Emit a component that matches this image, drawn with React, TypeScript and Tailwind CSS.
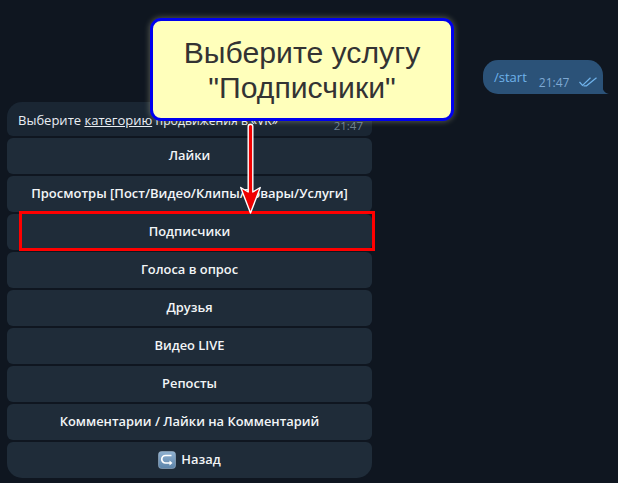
import React from "react";

const buttons = [
  { label: "Лайки", size: "text-[12.9px]" },
  { label: "Просмотры [Пост/Видео/Клипы/Товары/Услуги]", size: "text-[13px]" },
  { label: "Подписчики", size: "text-[12.9px]" },
  { label: "Голоса в опрос", size: "text-[12.9px]" },
  { label: "Друзья", size: "text-[12.9px]" },
  { label: "Видео LIVE", size: "text-[12.9px]" },
  { label: "Репосты", size: "text-[12.9px]" },
  { label: "Комментарии / Лайки на Комментарий", size: "text-[12.9px]" },
];

const BackIcon = () => (
  <svg width="18" height="18" viewBox="0 0 18 18" className="shrink-0">
    <defs>
      <linearGradient id="backFill" x1="0" y1="0" x2="0" y2="1">
        <stop offset="0" stopColor="#8fb0cf" />
        <stop offset="1" stopColor="#5c84aa" />
      </linearGradient>
    </defs>
    <rect x="0.5" y="0.5" width="17" height="17" rx="3" fill="url(#backFill)" stroke="#9db4c8" strokeWidth="0.6" />
    <path d="M13.5 4.5H7.5a3.5 3.5 0 0 0 0 7.5h4.5" fill="none" stroke="#fff" strokeWidth="1.7" />
    <path d="M11.5 9.5l3 2.5-3 2.5z" fill="#fff" />
  </svg>
);

const ReadChecks = () => (
  <svg width="18" height="10" viewBox="0 0 18 10" fill="none" stroke="#6fb2ea" strokeWidth="1.2">
    <path d="M0.5 5L3.5 8.5L11.5 0.8" />
    <path d="M4.5 8.8H7.5L17.5 0.8" />
  </svg>
);

const App = () => {
  return (
    <div className="relative w-[618px] h-[483px] overflow-hidden bg-[#0f1620] font-['Open_Sans',sans-serif]">
      <div className="flex justify-end pt-[60px] pr-[15px]">
        <div className="relative flex items-start w-[120px] h-[34px] pl-[11px] rounded-[15px] rounded-br-none bg-[#2b5278]">
          <span className="mt-[8px] text-[13px] leading-[18px] text-[#6fb2ea]">/start</span>
          <span className="ml-[12px] mt-[15px] text-[12px] leading-[15px] text-[#7da8d3]">21:47</span>
          <span className="ml-[10px] mt-[17px]">
            <ReadChecks />
          </span>
          <svg width="7" height="10" viewBox="0 0 7 10" className="absolute right-[-6px] bottom-0">
            <path d="M0 0C0 5 2 9 7 10H0z" fill="#2b5278" />
          </svg>
        </div>
      </div>

      <div className="flex flex-col gap-[2px] w-[365px] ml-[7px] mt-[8px]">
        <div className="relative h-[34px] pl-[11px] pt-[9px] rounded-t-[15px] rounded-b-[6px] bg-[#1a2633] text-[13px] leading-[18px] text-[#e9eef3]">
          Выберите <span className="underline">категорию</span>{" "}
          <span className="text-[12.2px]">продвижения в «VK»</span>
          <span className="absolute right-[9px] bottom-[3px] text-[11.5px] leading-[15px] text-[#6d7f8f]">21:47</span>
        </div>
        {buttons.map((b) => (
          <div
            key={b.label}
            className={`flex items-center justify-center h-[36px] rounded-[6px] bg-[#1f2c39] ${b.size} font-semibold text-[#f2f5f7]`}
          >
            {b.label}
          </div>
        ))}
        <div className="flex items-center justify-center gap-[5px] h-[36px] rounded-t-[6px] rounded-b-[15px] bg-[#1f2c39] text-[12.9px] font-semibold text-[#f2f5f7]">
          <BackIcon />
          Назад
        </div>
      </div>

      {/* annotations over the screenshot */}
      <div className="absolute left-[19px] top-[211px] w-[356px] h-[40px] border-[3px] border-[#ff0000]" />

      <svg width="30" height="100" viewBox="0 0 30 100" className="absolute left-[236px] top-[120px]">
        <path
          d="M12.2 6.5a2.3 2.3 0 0 1 4.6 0V72l7.5-4.5L14.5 93 4.7 67.5 12.2 72z"
          fill="#f00000"
          stroke="#fff"
          strokeWidth="1.4"
          strokeLinejoin="round"
        />
      </svg>

      <div className="absolute left-[150px] top-[18px] flex flex-col items-center justify-center w-[304px] h-[103px] pt-[1px] rounded-[11px] border-[3px] border-[#0000ee] bg-[#ffffbb] shadow-[0_0_6px_rgba(255,255,200,0.35)] font-['Liberation_Sans',sans-serif] text-[30.2px] leading-[35px] text-[#333333]">
        <span>Выберите услугу</span>
        <span>"Подписчики"</span>
      </div>
    </div>
  );
};

export default App;
